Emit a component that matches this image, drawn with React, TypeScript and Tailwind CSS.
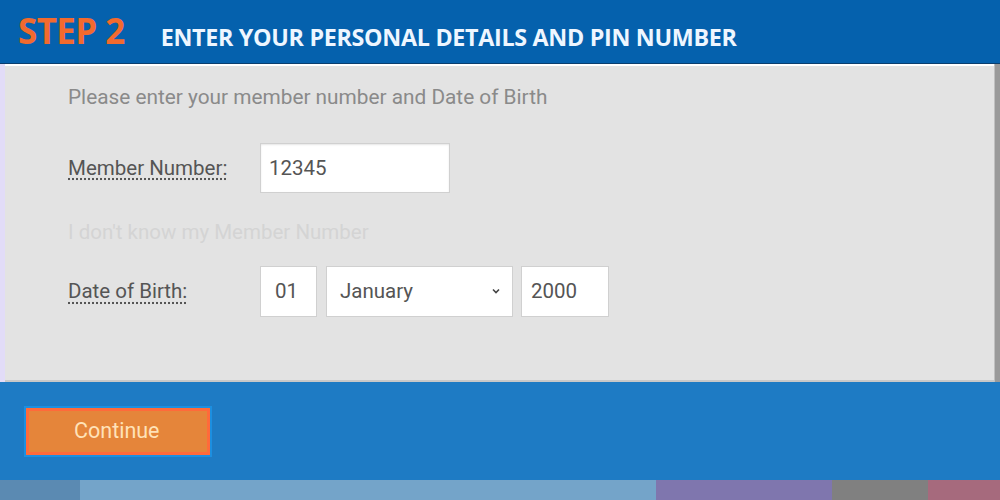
import React from "react";

export default function App() {
  return (
    <div className="w-[1000px] h-[500px] overflow-hidden flex flex-col bg-[#1e7bc4]" style={{ fontFamily: "Roboto, 'Liberation Sans', sans-serif" }}>
      <div className="h-[64px] bg-[#0561ad] flex items-center border-b border-[#0a3e6e]">
        <span className="ml-[18px] mb-[1px] text-[35px] font-bold text-[#f26a2e] tracking-[-0.6px]" style={{ fontFamily: "'Open Sans', sans-serif" }}>
          STEP 2
        </span>
        <span className="ml-[36px] mt-[11px] text-[23.3px] font-bold text-[#eef6ff] tracking-[-0.3px]" style={{ fontFamily: "'Open Sans', sans-serif" }}>
          ENTER YOUR PERSONAL DETAILS AND PIN NUMBER
        </span>
      </div>

      <div className="h-[318px] flex">
        <div className="w-[5px] bg-[#e2dcf8]" />
        <div className="flex-1 bg-[#e3e3e3] border-t-2 border-white border-b-2 border-b-[#c8c8c8] pl-[63px] pt-[16px]">
          <p className="text-[20.8px] text-[#8a8a8a]">Please enter your member number and Date of Birth</p>

          <div className="flex items-center mt-[30px]">
            <span className="w-[192px] text-[20.5px] text-[#555] underline decoration-dotted underline-offset-4">Member Number:</span>
            <input
              readOnly
              value="12345"
              className="w-[190px] h-[50px] bg-white border border-[#d0d0d0] shadow-[inset_0_1px_2px_rgba(0,0,0,0.1)] px-[8px] text-[20.5px] text-[#555] outline-none"
            />
          </div>

          <p className="mt-[24px] text-[20.5px] text-[#d4d4d4]">I don't know my Member Number</p>

          <div className="flex items-center mt-[18px]">
            <span className="w-[192px] text-[20.5px] text-[#555] underline decoration-dotted underline-offset-4">Date of Birth:</span>
            <input
              readOnly
              value="01"
              className="w-[57px] h-[51px] bg-white border border-[#d0d0d0] px-[14px] text-[20.5px] text-[#555] outline-none"
            />
            <div className="ml-[9px] w-[187px] h-[51px] bg-white border border-[#d0d0d0] flex items-center justify-between px-[13px] text-[20.5px] text-[#555]">
              <span>January</span>
              <svg width="10" height="10" viewBox="0 0 10 10" className="mr-[-2px]">
                <path d="M2 3.5 L5 6.5 L8 3.5" fill="none" stroke="#444" strokeWidth="1.6" />
              </svg>
            </div>
            <input
              readOnly
              value="2000"
              className="ml-[8px] w-[88px] h-[51px] bg-white border border-[#d0d0d0] px-[9px] text-[20.5px] text-[#555] outline-none"
            />
          </div>
        </div>
        <div className="w-[6px] bg-[#9a9a9a] border-l border-[#c0c0c0]" />
      </div>

      <div className="h-[98px] bg-[#1e7bc4] pl-[26px] pt-[26px]">
        <button className="w-[184px] h-[47px] bg-[#e5853a] border-[3px] border-[#ff6a3a] text-[21.5px] text-[#ffe2b8] text-left pl-[45px] shadow-[0_0_0_2px_#1c8fe0]">
          Continue
        </button>
      </div>

      <div className="h-[20px] flex">
        <div className="w-[80px] bg-[#5b8ab2]" />
        <div className="w-[576px] bg-[#74a4c9]" />
        <div className="w-[176px] bg-[#7f76ae]" />
        <div className="w-[96px] bg-[#808080]" />
        <div className="flex-1 bg-[#a66a7d]" />
      </div>
    </div>
  );
}
